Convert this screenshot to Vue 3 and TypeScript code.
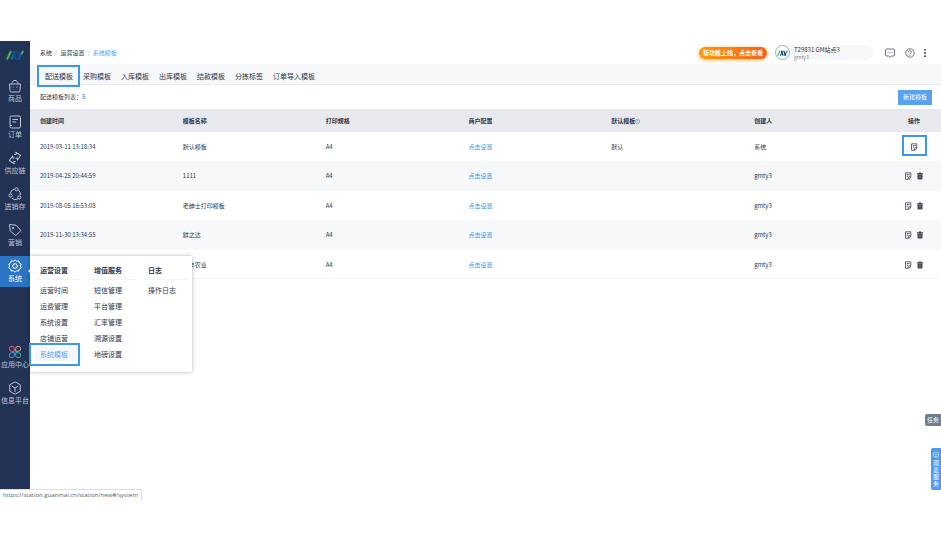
<script setup lang="ts">
interface NavItem {
  label: string
  icon: string
  active?: boolean
}

interface Row {
  created: string
  name: string
  isDefault: string
  creator: string
  removable: boolean
}

const primaryNav: NavItem[] = [
  { label: '商品', icon: 'bag' },
  { label: '订单', icon: 'order' },
  { label: '供应链', icon: 'chain' },
  { label: '进销存', icon: 'stock' },
  { label: '营销', icon: 'tag' },
  { label: '系统', icon: 'gear', active: true },
]

const secondaryNav: NavItem[] = [
  { label: '应用中心', icon: 'apps' },
  { label: '信息平台', icon: 'cube' },
]

const menu = [
  { title: '运营设置', items: ['运营时间', '运费管理', '系统设置', '店铺运营', '系统模板'] },
  { title: '增值服务', items: ['短信管理', '平台管理', '汇率管理', '溯源设置', '地磅设置'] },
  { title: '日志', items: ['操作日志'] },
]

const tabs = ['配送模板', '采购模板', '入库模板', '出库模板', '结款模板', '分拣标签', '订单导入模板']

const rows: Row[] = [
  { created: '2019-03-11 13:18:34', name: '默认模板', isDefault: '默认', creator: '系统', removable: false },
  { created: '2019-04-25 20:44:59', name: '1111', isDefault: '', creator: 'gmty3', removable: true },
  { created: '2019-08-05 16:53:08', name: '老绅士打印模板', isDefault: '', creator: 'gmty3', removable: true },
  { created: '2019-11-30 13:34:55', name: '鲜之达', isDefault: '', creator: 'gmty3', removable: true },
  { created: '', name: '新丰农业', isDefault: '', creator: 'gmty3', removable: true },
]
</script>

<template>
  <div class="page">
    <div class="shell">
      <aside class="sidebar">
        <a href="#" class="logo" aria-label="首页">
          <svg width="18" height="10" viewBox="0 0 18 10" fill="none" stroke-width="2">
            <path d="M1 9.500 5 1" stroke="#45b649" />
            <path d="M5.500 9.500 9 1.500M12.500 9.500 15.500 3" stroke="#1766a8" />
            <path d="M7 1 10 9.500M11 1 14 9.500" stroke="#154a8f" />
            <path d="M15.500 4 17.200 1" stroke="#45b649" />
          </svg>
        </a>
        <nav class="nav">
          <template v-for="(group, g) in [primaryNav, secondaryNav]" :key="g">
            <div class="nav-group">
              <div v-for="item in group" :key="item.label" class="nav-slot">
                <a href="#" class="nav-item" :class="{ active: item.active }">
                  <svg class="nav-icon" viewBox="0 0 14 14" fill="none" stroke="currentColor" stroke-width="1">
                    <template v-if="item.icon === 'bag'">
                      <path d="M1.500 5h11l-.5 6.500a1.500 1.500 0 0 1-1.500 1.500h-7A1.500 1.500 0 0 1 2 11.500z" />
                      <path d="M4 5C4 .2 10 .2 10 5M5 7.500v1M9 7.500v1" />
                    </template>
                    <template v-else-if="item.icon === 'order'">
                      <rect x="2" y="1" width="10.500" height="12" rx="1.500" />
                      <path d="M4.500 4.500h5.500M4.500 7h3.500M2 10.500h2" />
                    </template>
                    <template v-else-if="item.icon === 'chain'">
                      <path d="M7 10.500H5v2L1 8.300 5 4.500v2.200h1.500" stroke-linejoin="round" transform="rotate(-12 7 7)" />
                      <path d="M7 3.500h2v-2L13 5.700 9 9.500V7.300H7.500" stroke-linejoin="round" transform="rotate(-12 7 7)" />
                    </template>
                    <template v-else-if="item.icon === 'stock'">
                      <path d="M6 2.300A5 5 0 0 0 2.300 6.300M3.800 11.200a5 5 0 0 0 6.200.6M12.300 8.300A5 5 0 0 0 10.300 3" />
                      <circle cx="8.500" cy="2.300" r="1.600" />
                      <circle cx="2.500" cy="8.500" r="1.600" />
                      <circle cx="11.300" cy="10.500" r="1.600" />
                    </template>
                    <template v-else-if="item.icon === 'tag'">
                      <path d="M1.500 1.500 8 2.200 13 7.500 7.800 12.500 2.200 8z" stroke-linejoin="round" />
                      <circle cx="5" cy="5" r=".8" />
                    </template>
                    <template v-else-if="item.icon === 'gear'">
                      <path d="M7 .8 8.600 2.200 10.700 1.900 11.300 4 13.200 5 12.500 7 13.200 9 11.300 10 10.700 12.100 8.600 11.800 7 13.200 5.400 11.800 3.300 12.100 2.700 10 .8 9 1.500 7 .8 5 2.700 4 3.300 1.900 5.400 2.200z" stroke-linejoin="round" />
                      <circle cx="7" cy="7" r="2.300" />
                    </template>
                    <template v-else-if="item.icon === 'apps'">
                      <path d="M6.300 6.300H3.800a2.500 2.500 0 1 1 2.500-2.500z" stroke="#e0606c" />
                      <path d="M7.700 6.300V3.800a2.500 2.500 0 1 1 2.500 2.500z" stroke="#d3a08e" />
                      <path d="M6.300 7.700v2.500a2.500 2.500 0 1 1-2.500-2.500z" stroke="#5b8fdc" />
                      <path d="M7.700 7.700h2.500a2.500 2.500 0 1 1-2.500 2.500z" stroke="#38b294" />
                    </template>
                    <template v-else>
                      <path d="M7 .8 12.300 3.800v6.400L7 13.200 1.700 10.200V3.800z" stroke-linejoin="round" />
                      <path d="M3.800 5 7 7 10.200 5M7 7v3.800" />
                    </template>
                  </svg>
                  <span>{{ item.label }}</span>
                </a>
                <div v-if="item.active" class="flyout">
                  <section v-for="col in menu" :key="col.title" class="flyout-col">
                    <h3>{{ col.title }}</h3>
                    <a v-for="entry in col.items" :key="entry" href="#" :class="{ current: entry === '系统模板' }">{{ entry }}</a>
                  </section>
                </div>
              </div>
            </div>
          </template>
        </nav>
      </aside>

      <main class="content">
        <header class="topbar">
          <nav class="crumbs">
            <a href="#">系统</a><i>/</i><a href="#">运营设置</a><i>/</i><a href="#" class="here">系统模板</a>
          </nav>
          <button type="button" class="promo">新功能上线，点击查看</button>
          <div class="account">
            <span class="avatar">
              <svg width="11" height="6" viewBox="0 0 18 10" fill="none" stroke-width="2">
                <path d="M1 9.500 5 1" stroke="#45b649" />
                <path d="M5.500 9.500 9 1.500M12.500 9.500 15.500 3" stroke="#1766a8" />
                <path d="M7 1 10 9.500M11 1 14 9.500" stroke="#123f86" />
                <path d="M15.500 4 17.200 1" stroke="#45b649" />
              </svg>
            </span>
            <span class="who"><b>T29831 GM站点3</b><small>gmty3</small></span>
          </div>
          <div class="tools">
            <button type="button" aria-label="消息">
              <svg width="10" height="10" viewBox="0 0 10 10" fill="none" stroke="#4a5264" stroke-width=".8">
                <path d="M1.500 1h7a1 1 0 0 1 1 1v5a1 1 0 0 1-1 1H6.300L5 9.300 3.700 8H1.500a1 1 0 0 1-1-1V2a1 1 0 0 1 1-1z" />
                <path d="M2.500 4.700h1M4.500 4.700h1M6.500 4.700h1" />
              </svg>
            </button>
            <button type="button" aria-label="帮助">
              <svg width="10" height="10" viewBox="0 0 10 10" fill="none" stroke="#4a5264" stroke-width=".8">
                <circle cx="5" cy="5" r="4.200" />
                <path d="M3.600 4.100c0-1.900 2.900-1.800 2.800 0C6.400 5 5 5 5 6.200M5 6.900v.8" />
              </svg>
            </button>
            <button type="button" aria-label="更多">
              <svg width="4" height="10" viewBox="0 0 4 10" fill="#2b3242">
                <circle cx="2" cy="1.800" r=".9" /><circle cx="2" cy="5" r=".9" /><circle cx="2" cy="8.200" r=".9" />
              </svg>
            </button>
          </div>
        </header>

        <nav class="tabs">
          <a v-for="(tab, i) in tabs" :key="tab" href="#" :class="{ marked: i === 0 }">{{ tab }}</a>
        </nav>

        <div class="listbar">
          <span>配送模板列表：<b>5</b></span>
          <button type="button" class="create">新建模板</button>
        </div>

        <table>
          <thead>
            <tr>
              <th>创建时间</th>
              <th>模板名称</th>
              <th>打印规格</th>
              <th>商户配置</th>
              <th>
                默认模板<svg class="hint" width="5" height="5" viewBox="0 0 10 10" fill="none" stroke="#6b7283"><circle cx="5" cy="5" r="4.400" /><path d="M3.500 4c0-2 3-2 3 0C6.500 5 5 5 5 6.200M5 7v1" /></svg>
              </th>
              <th>创建人</th>
              <th class="ops">操作</th>
            </tr>
          </thead>
          <tbody>
            <tr v-for="(row, i) in rows" :key="i">
              <td>{{ row.created }}</td>
              <td>{{ row.name }}</td>
              <td>A4</td>
              <td><a href="#">点击设置</a></td>
              <td>{{ row.isDefault }}</td>
              <td>{{ row.creator }}</td>
              <td class="ops">
                <div class="actions" :class="{ marked: !row.removable }">
                  <button type="button" aria-label="编辑">
                    <svg width="8" height="8" viewBox="0 0 8 8" fill="none" stroke="#3a4052" stroke-width=".8">
                      <path d="M4 7.300H1.500V.8h5.300V4M2.700 2.600h3M2.700 4.200h1.600" />
                      <path d="M4.300 7.300V5.200L7 4.500 5.800 6.800z" />
                    </svg>
                  </button>
                  <button v-if="row.removable" type="button" aria-label="删除">
                    <svg width="8" height="8" viewBox="0 0 8 8">
                      <path d="M3 .4h2v.8h2v1H1v-1h2zM1.500 2.500h5v4.300a.8.800 0 0 1-.8.800H2.300a.8.800 0 0 1-.8-.8z" fill="#3a4052" />
                      <path d="M3.200 3.300v3.500M4.800 3.300v3.500" stroke="#9aa0ad" stroke-width=".5" />
                    </svg>
                  </button>
                </div>
              </td>
            </tr>
          </tbody>
        </table>

        <button type="button" class="task">任务</button>
        <button type="button" class="service">
          <svg width="6" height="6" viewBox="0 0 10 10" fill="none" stroke="#fff"><rect x=".8" y="1" width="8.400" height="7" rx="2" /><path d="M3 4.500h4M4 9.500h2" /></svg>
          <span>观麦服务</span>
        </button>
      </main>
    </div>
    <footer class="status">https://station.guanmai.cn/station/new#/system</footer>
  </div>
</template>

<style>
body {
  margin: 0;
  background: #fff;
}
</style>

<style scoped>
.page {
  min-height: 100vh;
  box-sizing: border-box;
  padding-top: 41px;
  font: 6px/8px "Noto Sans CJK SC", sans-serif;
  color: #2f3648;
}
a {
  color: inherit;
  text-decoration: none;
}
button {
  border: 0;
  padding: 0;
  margin: 0;
  background: none;
  font: inherit;
  color: inherit;
  cursor: pointer;
}
svg {
  display: block;
}
.shell {
  display: flex;
  min-height: calc(100vh - 93px);
}
.sidebar {
  flex: none;
  width: 30px;
  background: #233356;
  color: #bcc5d6;
}
.logo {
  display: flex;
  justify-content: center;
  padding: 9px 0 16px;
}
.nav-group {
  display: flex;
  flex-direction: column;
  gap: 5px;
}
.nav-group + .nav-group {
  margin-top: 55px;
}
.nav-slot {
  position: relative;
}
.nav-item {
  display: flex;
  flex-direction: column;
  align-items: center;
  height: 31px;
  font-size: 7px;
  line-height: 10px;
  white-space: nowrap;
}
.nav-icon {
  flex: none;
  width: 14px;
  height: 14px;
  margin: 3px 0 0;
}
.nav-item.active {
  background: #2b75c4;
  color: #fff;
}
.nav-item.active::after {
  content: "";
  position: absolute;
  right: 0;
  top: 13px;
  border: 2px solid transparent;
  border-right-color: #fff;
  border-left-width: 0;
}
.flyout {
  position: absolute;
  z-index: 2;
  left: 30px;
  top: 0;
  display: flex;
  gap: 8px;
  padding: 5px 3px 9px 5px;
  background: #fff;
  color: #2f3648;
  box-shadow: 0 0 4px rgba(0, 0, 0, 0.3);
}
.flyout-col {
  width: 46px;
}
.flyout h3 {
  margin: 0 0 3px;
  padding: 4px 0 4px 5px;
  border-bottom: 1px solid #f3f4f6;
  font-size: 7px;
  line-height: 10px;
}
.flyout a {
  position: relative;
  display: block;
  padding-left: 5px;
  margin-bottom: 2px;
  font-size: 7px;
  line-height: 14px;
}
.flyout .current {
  background: #f5f7fa;
  color: #56a3f2;
}
.flyout .current::after {
  content: "";
  position: absolute;
  inset: -4px 1px -5px -6px;
  border: 2px solid #3b99ec;
}
.content {
  position: relative;
  flex: 1;
  min-width: 0;
}
.topbar {
  display: flex;
  align-items: center;
  height: 23px;
  padding: 0 14px 0 10px;
}
.crumbs {
  flex: 1;
}
.crumbs i {
  margin: 0 3px;
  color: #a5abb8;
  font-style: normal;
}
.crumbs .here {
  color: #56a3f2;
}
.promo {
  height: 12px;
  padding: 0 4px;
  margin-right: 8px;
  border-radius: 6px;
  background: linear-gradient(90deg, #ff9a0c, #f9601b);
  box-shadow: 0 1px 4px #ffb45c;
  color: #fff;
  font-weight: 700;
}
.account {
  display: flex;
  align-items: center;
  width: 98px;
  border-radius: 8px;
  background: #f6f7f9;
}
.avatar {
  display: flex;
  align-items: center;
  justify-content: center;
  width: 13px;
  height: 13px;
  margin-right: 4px;
  border: 1px solid #8ab7d8;
  border-radius: 50%;
  background: #fff;
}
.who {
  display: flex;
  flex-direction: column;
  line-height: 7px;
}
.who b {
  font-weight: 400;
}
.who small {
  font-size: 5px;
  color: #7d8494;
}
.tools {
  display: flex;
  gap: 10px;
  margin-left: 12px;
}
.tools button:last-child {
  margin-left: -2px;
}
.tabs {
  display: flex;
  align-items: center;
  gap: 10px;
  height: 20px;
  padding: 0 15px;
  border-bottom: 1px solid #ebedf1;
  background: #f6f8fa;
  font-size: 7px;
}
.tabs a {
  position: relative;
  padding-top: 4px;
}
.tabs .marked::after {
  content: "";
  position: absolute;
  inset: -3px -7px -7px -8px;
  border: 2px solid #3b99ec;
}
.listbar {
  display: flex;
  align-items: center;
  justify-content: space-between;
  height: 24px;
  padding: 0 9px 0 10px;
}
.listbar b {
  color: #56a3f2;
}
.create {
  height: 15px;
  padding: 0 5px;
  background: #56a3f2;
  color: #fff;
}
table {
  width: 100%;
  border-collapse: collapse;
  table-layout: fixed;
}
th,
td {
  padding: 0 0 0 10px;
  text-align: left;
}
th {
  height: 23px;
  background: #e7e9ef;
  font-weight: 700;
}
td {
  height: 29px;
}
td a {
  color: #4294ea;
}
tbody tr:nth-child(even) td {
  height: 30px;
  background: #f6f8fa;
}
tbody tr:last-child td {
  box-shadow: inset 0 -1px #f3f4f6;
}
.hint {
  display: inline-block;
  vertical-align: -1px;
}
.ops {
  width: 54px;
  padding: 0;
  text-align: center;
}
.actions {
  position: relative;
  display: flex;
  justify-content: center;
  gap: 4px;
}
.actions.marked::after {
  content: "";
  position: absolute;
  inset: -8px 14px -5px 15px;
  border: 2px solid #3b99ec;
  pointer-events: none;
}
.task,
.service {
  position: absolute;
  right: 0;
  border-radius: 2px 0 0 2px;
  color: #fff;
}
.task {
  bottom: 63px;
  width: 16px;
  height: 12px;
  background: #6f7e92;
}
.service {
  bottom: -1px;
  display: flex;
  flex-direction: column;
  align-items: center;
  justify-content: center;
  gap: 1px;
  width: 10px;
  height: 42px;
  background: #4d9cf0;
}
.service span {
  width: 6px;
  line-height: 7px;
  word-break: break-all;
}
.status {
  width: max-content;
  padding: 0 3px;
  border: solid #dcdee2;
  border-width: 1px 1px 0 0;
  color: #5c6068;
  font-family: "Open Sans", sans-serif;
  line-height: 10px;
}
</style>
